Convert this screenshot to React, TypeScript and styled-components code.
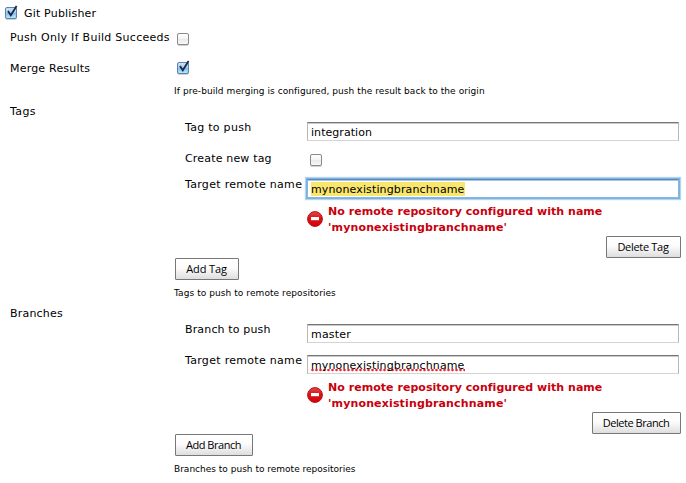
import React from "react";
import styled, { createGlobalStyle, css } from "styled-components";

const GlobalStyle = createGlobalStyle`
  body {
    margin: 0;
    background: #fff;
    overflow: hidden;
  }
`;

const Page = styled.main`
  width: 686px;
  height: 483px;
  box-sizing: border-box;
  background: #fff;
  color: #000;
  font: 11px/16px Verdana, "DejaVu Sans", sans-serif;
  white-space: nowrap;
`;

const Heading = styled.header`
  display: flex;
  gap: 4px;
  height: 29px;
  padding: 5px 0 0 4px;
  box-sizing: border-box;
`;

const Setting = styled.section<{ $height: number }>`
  display: grid;
  grid-template-columns: 164px 1fr;
  height: ${(p) => p.$height}px;
  padding-left: 10px;
`;

const Text = styled.span<{ $spacing?: number }>`
  padding-top: 1px;
  letter-spacing: ${(p) => p.$spacing ?? 0}px;
`;

const CheckCell = styled.div<{ $top?: number; $left?: number }>`
  padding: ${(p) => p.$top ?? 0}px 0 0 ${(p) => p.$left ?? 0}px;
  height: 18px;
`;

const Help = styled.p<{ $spacing: number }>`
  margin: 0;
  padding-left: 174px;
  height: 20px;
  font-size: 9px;
  line-height: 16px;
  letter-spacing: ${(p) => p.$spacing}px;
`;

const Group = styled.div`
  display: flex;
  flex-direction: column;
  padding-top: 16px;
`;

const Field = styled.div<{ $height: number }>`
  display: grid;
  grid-template-columns: 122px 374px;
  height: ${(p) => p.$height}px;
  padding-left: 11px;
`;

const InputBox = styled.div<{ $focused?: boolean }>`
  box-sizing: border-box;
  width: 372px;
  height: 19px;
  margin-top: 3px;
  padding: 1px 0 0 3px;
  border: 1px solid #d4d4d4;
  border-top-color: #777;
  border-left-color: #b8b8b8;
  border-right-color: #b8b8b8;
  box-shadow: inset 0 1px 0 #c8c8c8;
  background: #fff;
  line-height: 17px;
  ${(p) =>
    p.$focused &&
    css`
      border-color: #86b7e0;
      border-top-color: #5c89b3;
      box-shadow: inset 0 1px 0 #a9c8e4, 0 0 0 1px #7fb2de, 0 0 1px 2px #b4d5f0;
    `}
`;

const Value = styled.span<{ $selected?: boolean; $misspelled?: boolean; $spacing?: number }>`
  display: inline-block;
  height: 14px;
  line-height: 15px;
  letter-spacing: ${(p) => p.$spacing ?? 0}px;
  background: ${(p) => (p.$selected ? "#f9e66c" : "transparent")};
  ${(p) =>
    p.$misspelled &&
    css`
      background: radial-gradient(circle at 1.5px 1px, #f5222b 0.8px, #ff9a9a 1.3px, transparent 1.7px) 0 11px / 4px 3px
        repeat-x;
    `}
`;

const ErrorMessage = styled.div`
  display: grid;
  grid-template-columns: 21px 1fr;
  height: 33px;
  padding-left: 133px;
  color: #c8000c;
  font-weight: bold;
`;

const ErrorLines = styled.div`
  display: flex;
  flex-direction: column;
  padding-top: 1px;
`;

const ErrorLine = styled.span<{ $spacing: number }>`
  letter-spacing: ${(p) => p.$spacing}px;
`;

const ErrorIcon = styled.svg`
  width: 16px;
  height: 16px;
  margin-top: 8px;
`;

const Actions = styled.div<{ $end?: boolean }>`
  display: flex;
  justify-content: ${(p) => (p.$end ? "flex-end" : "flex-start")};
  padding: 0 ${(p) => (p.$end ? 5 : 0)}px 0 ${(p) => (p.$end ? 0 : 1)}px;
  height: 22px;
`;

const Button = styled.button<{ $width: number; $spacing?: number }>`
  box-sizing: border-box;
  width: ${(p) => p.$width}px;
  height: 22px;
  padding: 0 1px 0 0;
  border: 1px solid #777;
  border-radius: 1px;
  background: linear-gradient(#fff, #fcfcfc 45%, #f1f1f1 65%, #dedede);
  color: #000;
  font: 11px/18px "Open Sans", "Noto Sans", sans-serif;
  letter-spacing: ${(p) => p.$spacing ?? 0}px;
`;

const CheckArt = styled.svg`
  display: block;
  flex: none;
  width: 16px;
  height: 17px;
`;

function Checkbox({ checked = false, id }: { checked?: boolean; id: string }) {
  return (
    <CheckArt viewBox="0 0 16 17" role="checkbox" aria-checked={checked}>
      <defs>
        <linearGradient id={id} x1="0" y1="0" x2="0" y2="1">
          <stop offset="0" stopColor={checked ? "#cfe6f8" : "#fff"} />
          <stop offset=".45" stopColor={checked ? "#a5d0f2" : "#f6f6f6"} />
          <stop offset=".5" stopColor={checked ? "#80bcec" : "#e9e9e9"} />
          <stop offset="1" stopColor={checked ? "#b8ecff" : "#fafafa"} />
        </linearGradient>
      </defs>
      <rect x="1" y="3" width="12" height="12" rx="2" fill="#000" opacity=".18" />
      <rect x="1.5" y="2.5" width="11" height="11" rx="1.5" fill={`url(#${id})`} stroke={checked ? "#5d83ac" : "#8a8a8a"} />
      {checked && <path d="M4 6 6.8 10.3 12.6 1" fill="none" stroke="#1d2840" strokeWidth="1.8" />}
    </CheckArt>
  );
}

function MissingRemote({ id }: { id: string }) {
  return (
    <ErrorMessage role="alert">
      <ErrorIcon viewBox="0 0 16 16">
        <defs>
          <linearGradient id={id} x1="0" y1="0" x2="0" y2="1">
            <stop offset="0" stopColor="#e04a4c" />
            <stop offset=".4" stopColor="#d9181c" />
            <stop offset="1" stopColor="#d40006" />
          </linearGradient>
        </defs>
        <circle cx="8" cy="8" r="7.4" fill={`url(#${id})`} stroke="#b51217" />
        <rect x="4" y="6" width="8" height="3.2" fill="#fff" />
      </ErrorIcon>
      <ErrorLines>
        <ErrorLine $spacing={0.04}>No remote repository configured with name</ErrorLine>
        <ErrorLine $spacing={0.15}>'mynonexistingbranchname'</ErrorLine>
      </ErrorLines>
    </ErrorMessage>
  );
}

export default function App() {
  return (
    <>
      <GlobalStyle />
      <Page>
        <Heading>
          <Checkbox checked id="publisher" />
          <Text $spacing={0.18}>Git Publisher</Text>
        </Heading>
        <Setting $height={31}>
          <Text $spacing={0.28}>Push Only If Build Succeeds</Text>
          <CheckCell $left={2} $top={2}>
            <Checkbox id="push" />
          </CheckCell>
        </Setting>
        <Setting $height={23}>
          <Text $spacing={0.2}>Merge Results</Text>
          <CheckCell $left={2}>
            <Checkbox checked id="merge" />
          </CheckCell>
        </Setting>
        <Help $spacing={0.07}>If pre-build merging is configured, push the result back to the origin</Help>
        <Setting $height={155}>
          <Text $spacing={0.4}>Tags</Text>
          <Group>
            <Field $height={31}>
              <Text $spacing={0.28}>Tag to push</Text>
              <InputBox><Value $spacing={0.05}>integration</Value></InputBox>
            </Field>
            <Field $height={26}>
              <Text $spacing={0.17}>Create new tag</Text>
              <CheckCell $left={2} $top={2}><Checkbox id="create" /></CheckCell>
            </Field>
            <Field $height={27}>
              <Text $spacing={0.3}>Target remote name</Text>
              <InputBox $focused><Value $selected $spacing={0.13}>mynonexistingbranchname</Value></InputBox>
            </Field>
            <MissingRemote id="tag-error" />
            <Actions $end><Button $width={75} $spacing={-0.3}>Delete Tag</Button></Actions>
          </Group>
        </Setting>
        <Setting $height={27}>
          <span />
          <Actions><Button $width={64} $spacing={-0.1}>Add Tag</Button></Actions>
        </Setting>
        <Help $spacing={0.07}>Tags to push to remote repositories</Help>
        <Setting $height={129}>
          <Text $spacing={0.2}>Branches</Text>
          <Group>
            <Field $height={31}>
              <Text $spacing={0.15}>Branch to push</Text>
              <InputBox><Value $spacing={0.2}>master</Value></InputBox>
            </Field>
            <Field $height={27}>
              <Text $spacing={0.3}>Target remote name</Text>
              <InputBox><Value $misspelled $spacing={0.13}>mynonexistingbranchname</Value></InputBox>
            </Field>
            <MissingRemote id="branch-error" />
            <Actions $end><Button $width={89} $spacing={-0.45}>Delete Branch</Button></Actions>
          </Group>
        </Setting>
        <Setting $height={27}>
          <span />
          <Actions><Button $width={78} $spacing={-0.45}>Add Branch</Button></Actions>
        </Setting>
        <Help $spacing={0}>Branches to push to remote repositories</Help>
      </Page>
    </>
  );
}
